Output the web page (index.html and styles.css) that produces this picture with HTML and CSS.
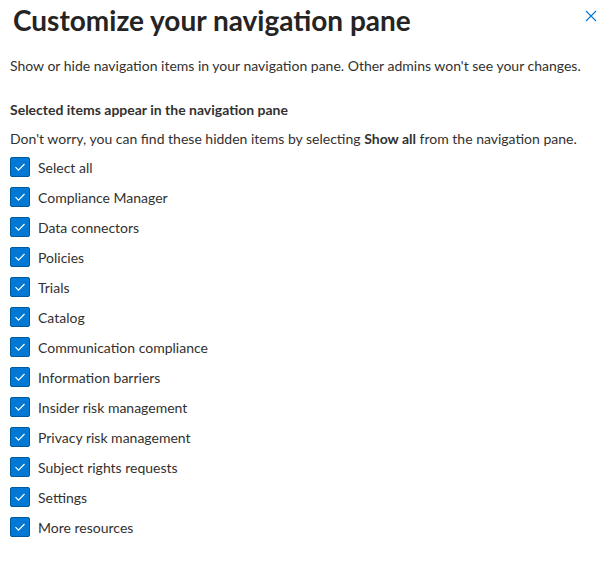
FILE: index.html
```html
<!DOCTYPE html>
<html lang="en">
<head>
    <meta charset="UTF-8">
    <title>Customize your navigation pane</title>
    <link rel="stylesheet" href="styles.css">
</head>
<body>
    <div class="panel">
        <div class="header">
            <h1>Customize your navigation pane</h1>
            <button class="close" aria-label="Close">
                <svg width="12" height="12" viewBox="0 0 12 12"><path d="M1 1L11 11M11 1L1 11" stroke="#0078d4" stroke-width="1.1" fill="none"/></svg>
            </button>
        </div>
        <p class="intro">Show or hide navigation items in your navigation pane. Other admins won't see your changes.</p>
        <h3>Selected items appear in the navigation pane</h3>
        <p class="note">Don't worry, you can find these hidden items by selecting <b>Show all</b> from the navigation pane.</p>
        <ul class="items">
            <li><span class="box"></span>Select all</li>
            <li><span class="box"></span>Compliance Manager</li>
            <li><span class="box"></span>Data connectors</li>
            <li><span class="box"></span>Policies</li>
            <li><span class="box"></span>Trials</li>
            <li><span class="box"></span>Catalog</li>
            <li><span class="box"></span>Communication compliance</li>
            <li><span class="box"></span>Information barriers</li>
            <li><span class="box"></span>Insider risk management</li>
            <li><span class="box"></span>Privacy risk management</li>
            <li><span class="box"></span>Subject rights requests</li>
            <li><span class="box"></span>Settings</li>
            <li><span class="box"></span>More resources</li>
        </ul>
    </div>
</body>
</html>
```

FILE: styles.css
```css
body {
    margin: 0;
    background: #fff;
    font-family: Lato, "Open Sans", sans-serif;
    color: #323130;
}
.panel {
    padding: 0 10px;
}
.header {
    display: flex;
    justify-content: space-between;
    align-items: flex-start;
    height: 44px;
}
h1 {
    margin: 0;
    padding: 2px 0 0 3px;
    font-size: 28px;
    font-weight: 700;
    line-height: 36px;
    color: #252423;
}
.close {
    background: none;
    border: none;
    padding: 0;
    margin: 10px 3px 0 0;
    width: 12px;
    height: 12px;
    cursor: pointer;
}
.intro {
    margin: 12px 0 0;
    font-size: 14px;
    line-height: 20px;
    white-space: nowrap;
}
h3 {
    margin: 24px 0 0;
    font-size: 14px;
    font-weight: 700;
    line-height: 20px;
}
.note {
    margin: 9px 0 0;
    font-size: 14px;
    line-height: 20px;
    white-space: nowrap;
}
.note b {
    font-weight: 700;
}
.items {
    list-style: none;
    margin: 3px 0 0;
    padding: 0;
}
.items li {
    display: flex;
    align-items: center;
    height: 30px;
    font-size: 14px;
}
.box {
    width: 18px;
    height: 18px;
    margin-right: 8px;
    border: 1px solid #005a9e;
    border-radius: 2px;
    background: #0078d4 url("data:image/svg+xml,%3Csvg xmlns='http://www.w3.org/2000/svg' width='18' height='18'%3E%3Cpath d='M4.5 9.2l3 3 6-6.2' stroke='white' stroke-width='1.2' fill='none'/%3E%3C/svg%3E") center no-repeat;
}
```
